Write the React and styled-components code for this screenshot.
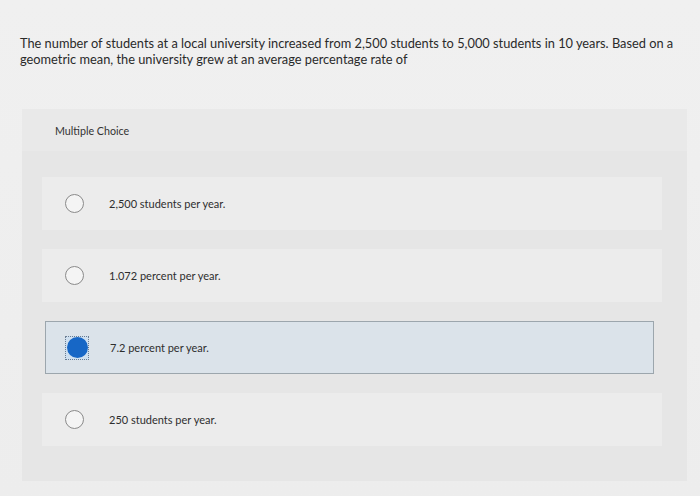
import React from 'react';
import styled, { createGlobalStyle } from 'styled-components';

const GlobalStyle = createGlobalStyle`
  html, body {
    margin: 0;
    padding: 0;
    background: #efefef;
    font-family: Lato, "Open Sans", "Liberation Sans", sans-serif;
    color: #2b2b2b;
  }
`;

const Page = styled.div`
  width: 700px;
  height: 496px;
  overflow: hidden;
  background: linear-gradient(180deg, #f0f0f0 0%, #ededed 100%);
  padding-top: 35px;
  box-sizing: border-box;
`;

const Question = styled.p`
  margin: 0 0 0 20px;
  width: 670px;
  font-size: 12.8px;
  line-height: 16px;
  color: #2a2a2a;
`;

const Panel = styled.div`
  margin: 42px 0 0 22px;
  width: 665px;
  background: #e6e6e6;
  padding-bottom: 35px;
`;

const PanelHeader = styled.div`
  height: 42px;
  display: flex;
  align-items: center;
  padding-left: 33px;
  background: #e9e9e9;
  font-size: 10.7px;
  color: #333;
`;

const Options = styled.div`
  display: flex;
  flex-direction: column;
  gap: 19px;
  padding: 26px 25px 0 20px;
`;

const Option = styled.div`
  height: 53px;
  box-sizing: border-box;
  display: flex;
  align-items: center;
  padding-left: ${p => (p.$selected ? '19px' : '22px')};
  margin: ${p => (p.$selected ? '0 8px 0 3px' : '0')};
  background: ${p => (p.$selected ? '#dbe3ea' : '#ececec')};
  border: ${p => (p.$selected ? '1px solid #9ca6ad' : '1px solid transparent')};
`;

const Radio = styled.span`
  width: 17px;
  height: 17px;
  border-radius: 50%;
  border: 1.5px solid #8a8a8a;
  background: #f4f4f4;
  flex: none;
`;

const FocusBox = styled.span`
  width: 24px;
  height: 24px;
  box-sizing: border-box;
  border: 1px dotted #6b7d92;
  display: flex;
  align-items: center;
  justify-content: center;
  flex: none;
  background: #cfe0f0;
`;

const Dot = styled.span`
  width: 21px;
  height: 21px;
  border-radius: 50%;
  background: #1767c6;
`;

const Label = styled.span`
  margin-left: ${p => (p.$selected ? '21px' : '25px')};
  font-size: 11px;
  color: #2e2e2e;
`;

const choices = [
  '2,500 students per year.',
  '1.072 percent per year.',
  '7.2 percent per year.',
  '250 students per year.',
];

export default function App() {
  const selected = 2;
  return (
    <Page>
      <GlobalStyle />
      <Question>
        The number of students at a local university increased from 2,500 students to 5,000 students in 10 years. Based on a
        geometric mean, the university grew at an average percentage rate of
      </Question>
      <Panel>
        <PanelHeader>Multiple Choice</PanelHeader>
        <Options>
          {choices.map((c, i) => (
            <Option key={c} $selected={i === selected}>
              {i === selected ? (
                <FocusBox><Dot /></FocusBox>
              ) : (
                <Radio />
              )}
              <Label $selected={i === selected}>{c}</Label>
            </Option>
          ))}
        </Options>
      </Panel>
    </Page>
  );
}
